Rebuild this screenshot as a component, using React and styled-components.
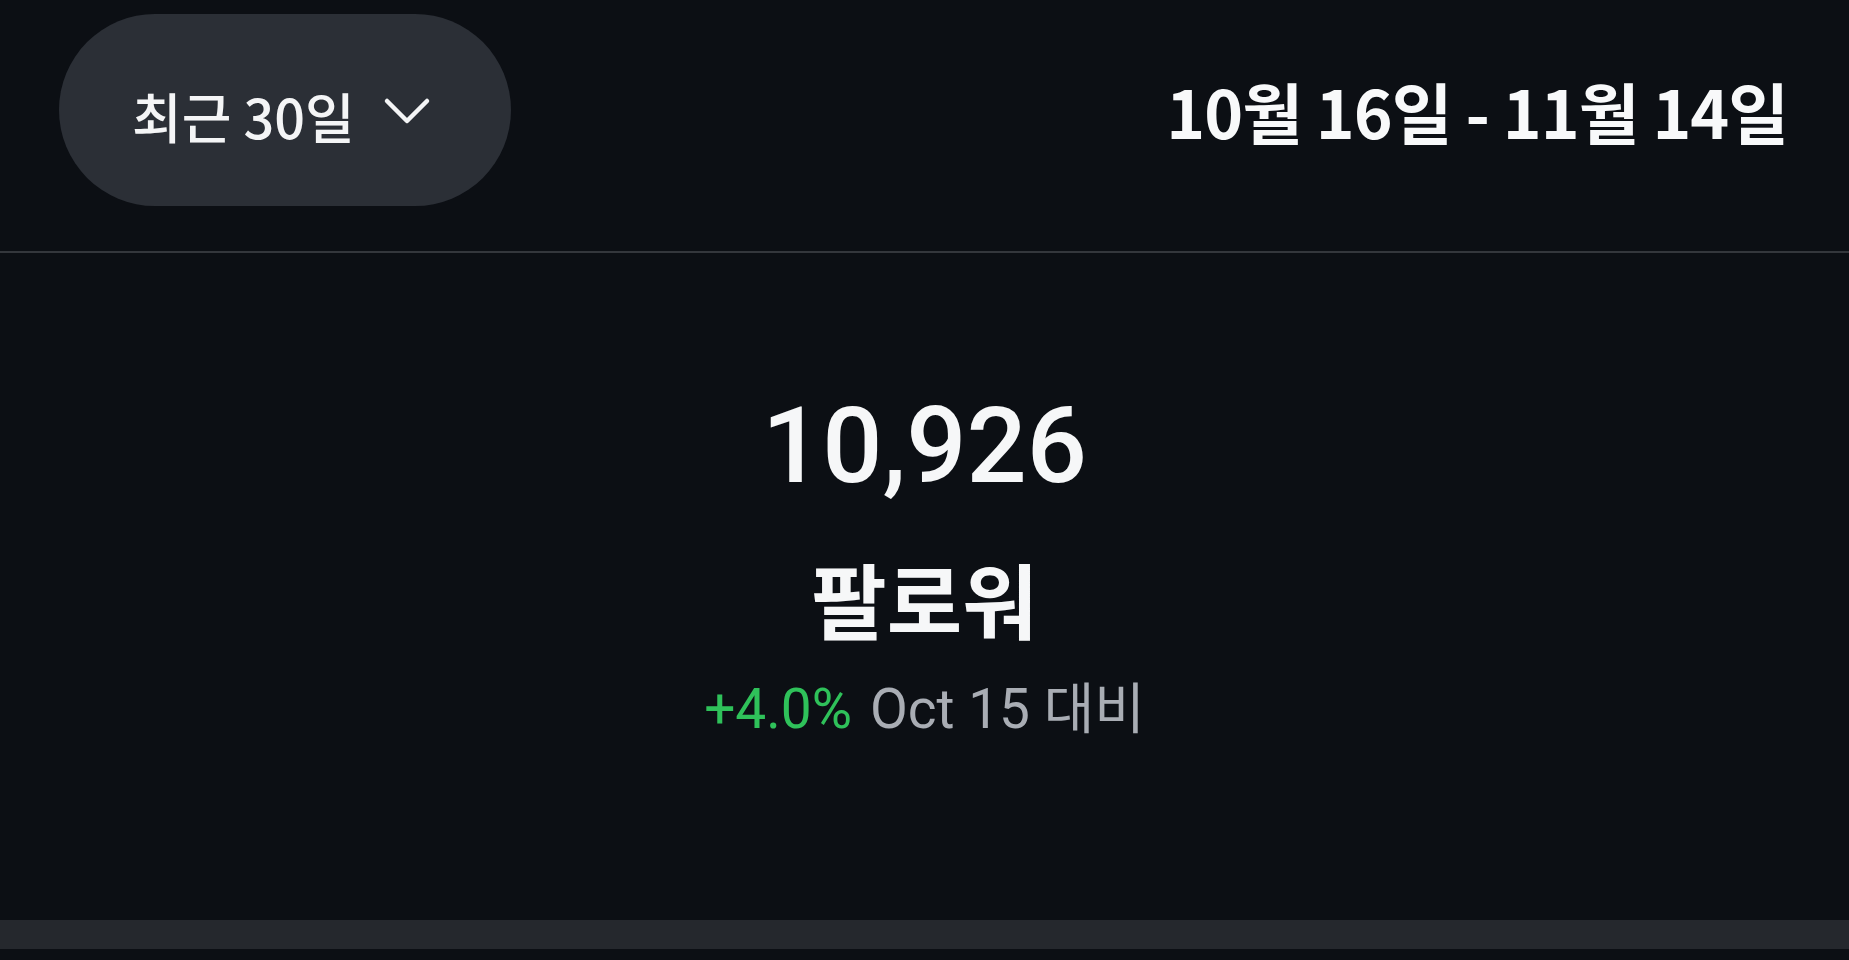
import React from 'react'
import styled, {createGlobalStyle} from 'styled-components'

const GlobalStyle = createGlobalStyle`
  html, body {
    margin: 0;
    padding: 0;
    background: #0c0f14;
  }
  body {
    font-family: Roboto, "Noto Sans CJK KR", sans-serif;
    color: #f4f5f6;
  }
`

const Chevron = () => (
    <svg width="48" height="32" viewBox="0 0 48 32" fill="none">
        <path d="M4 6 L24 26 L44 6" stroke="#f4f5f6" strokeWidth="4.5" strokeLinecap="round" strokeLinejoin="round"/>
    </svg>
)

const App = () => {
    return <Page>
        <GlobalStyle/>
        <Header>
            <RangeButton type="button">
                <span>최근 30일</span>
                <Chevron/>
            </RangeButton>
            <DateRange>10월 16일 - 11월 14일</DateRange>
        </Header>
        <Stats>
            <Count>10,926</Count>
            <Label>팔로워</Label>
            <Change>
                <Delta $up>+4.0%</Delta>
                <Compare>Oct 15 대비</Compare>
            </Change>
        </Stats>
        <Band/>
    </Page>
}

const Page = styled.div`
  width: 100%;
  height: 960px;
  display: flex;
  flex-direction: column;
  background: #0c0f14;
  overflow: hidden;
`

const Header = styled.div`
  box-sizing: border-box;
  height: 253px;
  padding: 14px 61px 0 59px;
  display: flex;
  align-items: flex-start;
  justify-content: space-between;
  border-bottom: 2px solid #34373c;
`

const RangeButton = styled.button`
  box-sizing: border-box;
  width: 452px;
  height: 192px;
  border: none;
  border-radius: 96px;
  background: #2b2f36;
  color: #f4f5f6;
  display: flex;
  align-items: center;
  justify-content: flex-start;
  gap: 28px;
  padding: 12px 0 0 73px;
  font-family: "Noto Sans CJK KR", sans-serif;
  font-size: 54px;
  font-weight: 500;
  cursor: pointer;

  span {
    line-height: 1;
  }
  svg {
    margin-top: -10px;
  }
`

const DateRange = styled.div`
  height: 192px;
  display: flex;
  align-items: center;
  font-family: "Noto Sans CJK KR", sans-serif;
  font-size: 66px;
  font-weight: 700;
  letter-spacing: -1px;
  color: #f8f9fa;
`

const Stats = styled.div`
  flex: 1;
  display: flex;
  flex-direction: column;
  align-items: center;
  padding-top: 140px;
`

const Count = styled.div`
  font-family: Roboto, sans-serif;
  font-size: 106px;
  font-weight: 500;
  line-height: 1;
  color: #f6f7f8;
`

const Label = styled.div`
  margin-top: 58px;
  font-family: "Noto Sans CJK KR", sans-serif;
  font-size: 82px;
  font-weight: 700;
  line-height: 1;
  color: #f6f7f8;
`

const Change = styled.div`
  margin-top: 43px;
  display: flex;
  gap: 18px;
  font-family: Roboto, "Noto Sans CJK KR", sans-serif;
  font-size: 55px;
  line-height: 1;
`

const Delta = styled.span`
  color: ${p => p.$up ? '#2fc15a' : '#e5484d'};
`

const Compare = styled.span`
  color: #a9adb4;
`

const Band = styled.div`
  height: 29px;
  margin-bottom: 11px;
  background: #25282d;
`

export default App
